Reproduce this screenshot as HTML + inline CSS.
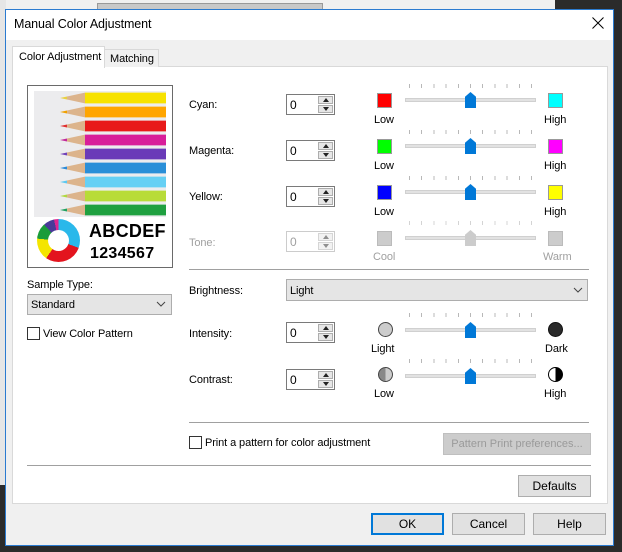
<!DOCTYPE html>
<html><head><meta charset="utf-8"><style>
*{box-sizing:border-box;margin:0;padding:0}
body{width:622px;height:552px;position:relative;overflow:hidden;background:#2b2b2b;font-family:"Liberation Sans",sans-serif;font-size:11px;color:#000}
.a{position:absolute}
.lbl{position:absolute;font-size:11px;white-space:nowrap;letter-spacing:-0.1px;margin-top:2px}
.dis{color:#a0a0a0}
.spin{position:absolute;width:49px;height:21px;border:1px solid #7a7a7a;background:#fff}
.spin span{position:absolute;left:3px;top:3px;font-size:12px}
.spin i{position:absolute;right:1px;width:15px;height:8px;background:#e6e6e6;border:1px solid #adadad}
.spin i.u{top:1px}.spin i.d{bottom:1px}
.spin i:after{content:"";position:absolute;left:4px;border-left:3px solid transparent;border-right:3px solid transparent}
.spin i.u:after{top:1px;border-bottom:4px solid #222}
.spin i.d:after{top:1px;border-top:4px solid #222}
.sw{position:absolute;width:15px;height:15px;border:1px solid #999}
.track{position:absolute;left:405px;width:131px;height:4px;background:#e2e2e2;border:1px solid #d0d0d0}
.thumb{position:absolute;left:465px;width:11px;height:16px;background:#0078d7;clip-path:polygon(50% 0,100% 30%,100% 100%,0 100%,0 30%)}
.ticks{position:absolute;left:409px;width:124px;height:4px;background:repeating-linear-gradient(90deg,#b8b8b8 0 1px,transparent 1px 12.2px)}
.btn{position:absolute;height:22px;border:1px solid #adadad;background:#e1e1e1;text-align:center;line-height:20px;font-size:12px}
.sep{position:absolute;height:1px;background:#a0a0a0}
.cb{position:absolute;width:13px;height:13px;border:1px solid #333;background:#fff}
.pen{position:absolute;left:60px;width:106px;height:12px;clip-path:polygon(0 50%,25px 5%,100% 5%,100% 95%,25px 95%)}
.chev{position:absolute;width:10px;height:6px}
</style></head><body>
<div class="a" style="left:0;top:0;width:555px;height:12px;background:#f0f0f0"></div>
<div class="a" style="left:97px;top:3px;width:226px;height:9px;background:#c8c8c8;border:1px solid #999"></div>
<div class="a" style="left:0;top:0;width:6px;height:485px;background:#e6e6e6"></div>
<div class="a" style="left:5px;top:9px;width:609px;height:537px;background:#f0f0f0;border:1px solid #2b7bd0"></div>
<div class="a" style="left:6px;top:10px;width:607px;height:30px;background:#fff"></div>
<div class="lbl" style="left:14px;top:15px;font-size:12.5px">Manual Color Adjustment</div>
<svg class="a" style="left:592px;top:17px" width="12" height="12"><path d="M0.5 0.5L11.5 11.5M11.5 0.5L0.5 11.5" stroke="#000" stroke-width="1"/></svg>
<div class="a" style="left:12px;top:66px;width:596px;height:438px;background:#fff;border:1px solid #d9d9d9"></div>
<div class="a" style="left:104px;top:49px;width:55px;height:18px;background:#f0f0f0;border:1px solid #d9d9d9;border-bottom:none"></div>
<div class="lbl" style="left:110px;top:51px">Matching</div>
<div class="a" style="left:12px;top:46px;width:93px;height:22px;background:#fff;border:1px solid #d9d9d9;border-bottom:none"></div>
<div class="lbl" style="left:19px;top:49px">Color Adjustment</div>
<div class="a" style="left:27px;top:85px;width:146px;height:183px;border:1px solid #6a6a6a;background:#fff"></div>
<div class="a" style="left:34px;top:91px;width:132px;height:126px;background:#ececee"></div>
<div class="pen" style="top:92px;background:linear-gradient(90deg,#e8d040 0 7px,#dcb48c 7px 25px,#f7e200 25px)"></div>
<div class="pen" style="top:106px;background:linear-gradient(90deg,#f0a000 0 7px,#dcb48c 7px 25px,#ffa500 25px)"></div>
<div class="pen" style="top:120px;background:linear-gradient(90deg,#e03030 0 7px,#dcb48c 7px 25px,#e81a1a 25px)"></div>
<div class="pen" style="top:134px;background:linear-gradient(90deg,#c2289a 0 7px,#dcb48c 7px 25px,#d81e9a 25px)"></div>
<div class="pen" style="top:148px;background:linear-gradient(90deg,#7040b8 0 7px,#dcb48c 7px 25px,#6a3ab8 25px)"></div>
<div class="pen" style="top:162px;background:linear-gradient(90deg,#2a8ad8 0 7px,#dcb48c 7px 25px,#2a8fd8 25px)"></div>
<div class="pen" style="top:176px;background:linear-gradient(90deg,#5cc8f0 0 7px,#dcb48c 7px 25px,#66d0f4 25px)"></div>
<div class="pen" style="top:190px;background:linear-gradient(90deg,#b0d840 0 7px,#dcb48c 7px 25px,#b8dc38 25px)"></div>
<div class="pen" style="top:204px;background:linear-gradient(90deg,#20a060 0 7px,#dcb48c 7px 25px,#1fa040 25px)"></div>
<div class="a" style="left:37px;top:219px;width:43px;height:43px;border-radius:50%;background:conic-gradient(#2ab8ea 0 110deg,#e3141e 110deg 215deg,#f4e500 215deg 275deg,#1b9c3a 275deg 318deg,#4a3a98 318deg 348deg,#e02590 348deg 360deg)"></div>
<div class="a" style="left:48px;top:230px;width:21px;height:21px;border-radius:50%;background:#fff"></div>
<div class="lbl" style="left:89px;top:219px;font-size:18px;font-weight:bold;letter-spacing:0.3px">ABCDEF</div>
<div class="lbl" style="left:90px;top:243px;font-size:16px;font-weight:bold;letter-spacing:0.3px">1234567</div>
<div class="lbl" style="left:27px;top:277px">Sample Type:</div>
<div class="a" style="left:27px;top:294px;width:145px;height:21px;background:#e5e5e5;border:1px solid #adadad"></div>
<div class="lbl" style="left:31px;top:297px">Standard</div>
<svg class="chev" style="left:156px;top:301px"><path d="M1 1L5 5L9 1" fill="none" stroke="#444"/></svg>
<div class="cb" style="left:27px;top:327px"></div>
<div class="lbl" style="left:43px;top:326px">View Color Pattern</div>

<div class="lbl" style="left:189px;top:97px">Cyan:</div>
<div class="spin" style="left:286px;top:94px"><span>0</span><i class="u"></i><i class="d"></i></div>
<div class="sw" style="left:377px;top:93px;background:#f00"></div><div class="lbl" style="left:374px;top:112px">Low</div>
<div class="ticks" style="top:84px"></div><div class="track" style="top:98px"></div><div class="thumb" style="top:92px"></div>
<div class="sw" style="left:548px;top:93px;background:#0ff"></div><div class="lbl" style="left:544px;top:112px">High</div>

<div class="lbl" style="left:189px;top:143px">Magenta:</div>
<div class="spin" style="left:286px;top:140px"><span>0</span><i class="u"></i><i class="d"></i></div>
<div class="sw" style="left:377px;top:139px;background:#0f0"></div><div class="lbl" style="left:374px;top:158px">Low</div>
<div class="ticks" style="top:130px"></div><div class="track" style="top:144px"></div><div class="thumb" style="top:138px"></div>
<div class="sw" style="left:548px;top:139px;background:#f0f"></div><div class="lbl" style="left:544px;top:158px">High</div>

<div class="lbl" style="left:189px;top:189px">Yellow:</div>
<div class="spin" style="left:286px;top:186px"><span>0</span><i class="u"></i><i class="d"></i></div>
<div class="sw" style="left:377px;top:185px;background:#00f"></div><div class="lbl" style="left:374px;top:204px">Low</div>
<div class="ticks" style="top:176px"></div><div class="track" style="top:190px"></div><div class="thumb" style="top:184px"></div>
<div class="sw" style="left:548px;top:185px;background:#ff0"></div><div class="lbl" style="left:544px;top:204px">High</div>

<div class="lbl dis" style="left:189px;top:235px">Tone:</div>
<div class="spin" style="left:286px;top:231px;border-color:#ccc"><span class="dis">0</span><i class="u" style="opacity:.5"></i><i class="d" style="opacity:.5"></i></div>
<div class="sw" style="left:377px;top:231px;background:#ccc;border-color:#bbb"></div><div class="lbl dis" style="left:373px;top:249px">Cool</div>
<div class="ticks" style="top:221px;opacity:.6"></div><div class="track" style="top:236px"></div><div class="thumb" style="top:230px;background:#ccc"></div>
<div class="sw" style="left:548px;top:231px;background:#ccc;border-color:#bbb"></div><div class="lbl dis" style="left:543px;top:249px">Warm</div>

<div class="sep" style="left:189px;top:269px;width:400px"></div>
<div class="lbl" style="left:189px;top:283px">Brightness:</div>
<div class="a" style="left:286px;top:279px;width:302px;height:22px;background:#e5e5e5;border:1px solid #adadad"></div>
<div class="lbl" style="left:290px;top:283px">Light</div>
<svg class="chev" style="left:573px;top:287px"><path d="M1 1L5 5L9 1" fill="none" stroke="#444"/></svg>

<div class="lbl" style="left:189px;top:326px">Intensity:</div>
<div class="spin" style="left:286px;top:322px"><span>0</span><i class="u"></i><i class="d"></i></div>
<div class="a" style="left:378px;top:322px;width:15px;height:15px;border-radius:50%;background:#ccc;border:1px solid #444"></div><div class="lbl" style="left:371px;top:341px">Light</div>
<div class="ticks" style="top:313px"></div><div class="track" style="top:328px"></div><div class="thumb" style="top:322px"></div>
<div class="a" style="left:548px;top:322px;width:15px;height:15px;border-radius:50%;background:#2a2a2a;border:1px solid #111"></div><div class="lbl" style="left:545px;top:341px">Dark</div>

<div class="lbl" style="left:189px;top:372px">Contrast:</div>
<div class="spin" style="left:286px;top:369px"><span>0</span><i class="u"></i><i class="d"></i></div>
<div class="a" style="left:378px;top:367px;width:15px;height:15px;border-radius:50%;background:linear-gradient(90deg,#888 50%,#ccc 50%);border:1px solid #444"></div><div class="lbl" style="left:374px;top:386px">Low</div>
<div class="ticks" style="top:359px"></div><div class="track" style="top:374px"></div><div class="thumb" style="top:368px"></div>
<div class="a" style="left:548px;top:367px;width:15px;height:15px;border-radius:50%;background:linear-gradient(90deg,#fff 50%,#000 50%);border:1px solid #000"></div><div class="lbl" style="left:544px;top:386px">High</div>

<div class="sep" style="left:189px;top:422px;width:400px"></div>
<div class="cb" style="left:189px;top:436px"></div>
<div class="lbl" style="left:205px;top:435px">Print a pattern for color adjustment</div>
<div class="btn" style="left:443px;top:433px;width:148px;background:#ccc;border-color:#bfbfbf;color:#9a9a9a;font-size:11px">Pattern Print preferences...</div>
<div class="sep" style="left:27px;top:465px;width:564px"></div>
<div class="btn" style="left:518px;top:475px;width:73px">Defaults</div>
<div class="btn" style="left:371px;top:513px;width:73px;border:2px solid #0078d7;line-height:18px">OK</div>
<div class="btn" style="left:452px;top:513px;width:73px">Cancel</div>
<div class="btn" style="left:533px;top:513px;width:73px">Help</div>
</body></html>
